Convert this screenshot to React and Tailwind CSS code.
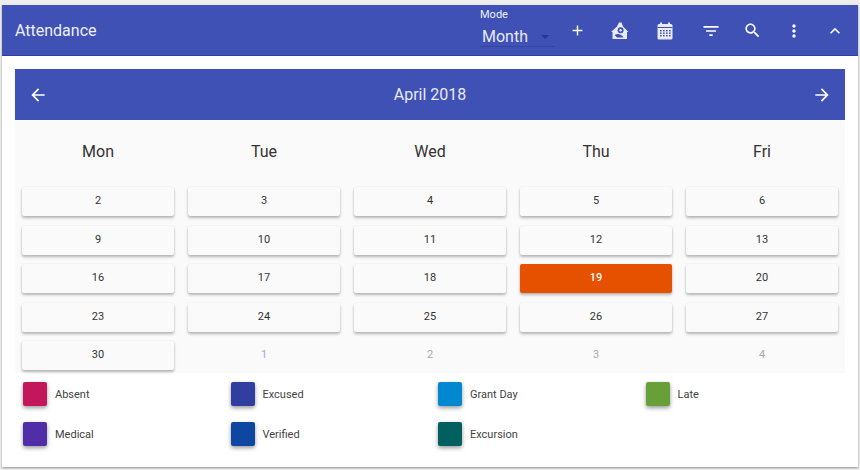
const Ic = ({ d, size = 24, className = "" }) => (
  <svg width={size} height={size} viewBox="0 0 24 24" fill="currentColor" className={className}>
    <path d={d} />
  </svg>
);

const P = {
  add: "M19 13h-6v6h-2v-6H5v-2h6V5h2v6h6v2z",
  back: "M20 11H7.83l5.59-5.59L12 4l-8 8 8 8 1.41-1.41L7.83 13H20v-2z",
  fwd: "M12 4l-1.41 1.41L16.17 11H4v2h12.17l-5.58 5.59L12 20l8-8z",
  filter: "M10 18h4v-2h-4v2zM3 6v2h18V6H3zm3 7h12v-2H6v2z",
  search:
    "M15.5 14h-.79l-.28-.27C15.41 12.59 16 11.11 16 9.5 16 5.91 13.09 3 9.5 3S3 5.91 3 9.5 5.91 16 9.5 16c1.61 0 3.09-.59 4.23-1.57l.27.28v.79l5 4.99L20.49 19l-4.99-5zm-6 0C7.01 14 5 11.99 5 9.5S7.01 5 9.5 5 14 7.01 14 9.5 11.99 14 9.5 14z",
  more: "M12 8c1.1 0 2-.9 2-2s-.9-2-2-2-2 .9-2 2 .9 2 2 2zm0 2c-1.1 0-2 .9-2 2s.9 2 2 2 2-.9 2-2-.9-2-2-2zm0 6c-1.1 0-2 .9-2 2s.9 2 2 2 2-.9 2-2-.9-2-2-2z",
  less: "M12 8l-6 6 1.41 1.41L12 10.83l4.59 4.58L18 14z",
};

const House = () => (
  <svg width="18" height="18" viewBox="0 0 18 18">
    <path d="M8 0.5L10.5 0.5L12 4.6 L17.5 10 L16 10 L16 17 L1.5 17 L1.5 10 L0 10 L6 4.6z" fill="#e8eaf6" />
    <circle cx="9.6" cy="8.3" r="3" fill="#3f51b5" />
    <circle cx="9.6" cy="8.3" r="1.2" fill="#e8eaf6" />
    <path d="M3.6 13C7 11 10.5 12.4 12.6 15.4L6 15.4z" fill="#3f51b5" />
  </svg>
);

const Cal = () => (
  <svg width="16" height="18" viewBox="0 0 16 18">
    <rect x="3" y="0.5" width="2" height="3" fill="#e8eaf6" />
    <rect x="11" y="0.5" width="2" height="3" fill="#e8eaf6" />
    <rect x="0.5" y="2" width="15" height="15.5" rx="1.5" fill="#e8eaf6" />
    <rect x="0.5" y="5" width="15" height="1" fill="#3f51b5" />
    {[8, 10.5, 13].map((y) =>
      [3, 6, 9, 12].map((x) => <rect key={x + "-" + y} x={x} y={y} width="1.6" height="1.4" fill="#3f51b5" />)
    )}
  </svg>
);

const rows = [
  [2, 3, 4, 5, 6],
  [9, 10, 11, 12, 13],
  [16, 17, 18, 19, 20],
  [23, 24, 25, 26, 27],
  [30, 1, 2, 3, 4],
];

const legend = [
  ["Absent", "bg-[#c2185b]"],
  ["Excused", "bg-[#303f9f]"],
  ["Grant Day", "bg-[#0288d1]"],
  ["Late", "bg-[#689f38]"],
  ["Medical", "bg-[#512da8]"],
  ["Verified", "bg-[#0d47a1]"],
  ["Excursion", "bg-[#00605f]"],
];

const Cell = ({ n, muted, active, tint }) => {
  if (muted) {
    return (
      <div className={"h-[29px] flex items-center justify-center text-[11px] " + (tint ? "text-[#9fa8da]" : "text-[#a8a8a8]")}>{n}</div>
    );
  }
  return (
    <div
      className={
        "h-[29px] rounded-[2px] flex items-center justify-center text-[11px] shadow-[0_2px_3px_rgba(0,0,0,0.28),0_0_2px_rgba(0,0,0,0.07)] " +
        (active ? "bg-[#e65100] text-white font-medium" : "bg-[#fafafa] text-[#333333]")
      }
    >
      {n}
    </div>
  );
};

export default function App() {
  return (
    <div className="w-[860px] h-[470px] bg-[#eeeeee] pt-[5px] pl-[2px] pr-[2px] font-['Roboto',sans-serif] overflow-hidden">
      <div className="w-[856px] h-[462px] bg-white shadow-[0_1px_2px_rgba(0,0,0,0.4)]">
        <header className="h-[51px] bg-[#3f51b5] text-white flex items-center border-b border-[#303f9f]">
          <div className="ml-[13px] text-[16px] text-[#eef0fa] w-[465px] pt-[1px]">Attendance</div>
          <div className="w-[75px] h-[50px] relative shrink-0">
            <div className="text-[11px] leading-none pt-[4px] text-[#eef0fa]">Mode</div>
            <div className="flex items-center justify-between ml-[2px] text-[16px] leading-none mt-[9px] text-[#e8eaf6] pb-[2px]">
              <span>Month</span>
              <span className="w-0 h-0 mr-[6px] border-l-[4px] border-r-[4px] border-t-[4px] border-l-transparent border-r-transparent border-t-[#283593]" />
            </div>
            <div className="absolute left-0 right-0 top-[41px] h-px bg-[#35469f]" />
          </div>
          <div className="flex items-center ml-[10px] h-full pt-[1px]">
            <div className="w-[24px] flex justify-center"><Ic d={P.add} size={17} /></div>
            <div className="w-[19px]" />
            <div className="w-[24px] flex justify-center"><House /></div>
            <div className="w-[21px]" />
            <div className="w-[24px] flex justify-center"><Cal /></div>
            <div className="w-[22px]" />
            <div className="w-[24px] flex justify-center"><Ic d={P.filter} size={20} /></div>
            <div className="w-[17px]" />
            <div className="w-[24px] flex justify-center"><Ic d={P.search} size={19} /></div>
            <div className="w-[18px]" />
            <div className="w-[24px] flex justify-center"><Ic d={P.more} size={20} /></div>
            <div className="w-[17px]" />
            <div className="w-[24px] flex justify-center"><Ic d={P.less} size={20} /></div>
          </div>
        </header>

        <div className="pt-[13px] pl-[13px] pr-[13px]">
          <div className="h-[51px] bg-[#3f51b5] text-white flex items-center justify-between px-[13px] shadow-[0_1px_1px_rgba(0,0,0,0.15)]">
            <Ic d={P.back} size={20} />
            <span className="text-[16px] text-[#e8eaf6]">April 2018</span>
            <Ic d={P.fwd} size={20} />
          </div>

          <div className="bg-[#fafafa] h-[253px]">
            <div className="grid grid-cols-5 h-[67px] pt-[21px] text-[16px] leading-[22px] text-[#333333] text-center">
              {["Mon", "Tue", "Wed", "Thu", "Fri"].map((d) => (
                <div key={d}>{d}</div>
              ))}
            </div>
            <div className="flex flex-col gap-[9.5px]">
              {rows.map((r, i) => (
                <div key={i} className="grid grid-cols-5">
                  {r.map((n, j) => (
                    <div key={j} className="px-[7px]">
                      <Cell n={n} muted={i === 4 && j > 0} active={n === 19} tint={j === 1} />
                    </div>
                  ))}
                </div>
              ))}
            </div>
          </div>

          <div className="grid grid-cols-4 gap-y-[16px] pt-[9px]">
            {legend.map(([label, c]) => (
              <div key={label} className="flex items-center h-[24px] pl-[8px]">
                <div className={"w-[24px] h-[24px] rounded-[2px] shadow-[0_2px_4px_rgba(0,0,0,0.4)] " + c} />
                <span className="ml-[8px] pt-[2px] text-[11px] text-[#424242]">{label}</span>
              </div>
            ))}
          </div>
        </div>
      </div>
    </div>
  );
}
